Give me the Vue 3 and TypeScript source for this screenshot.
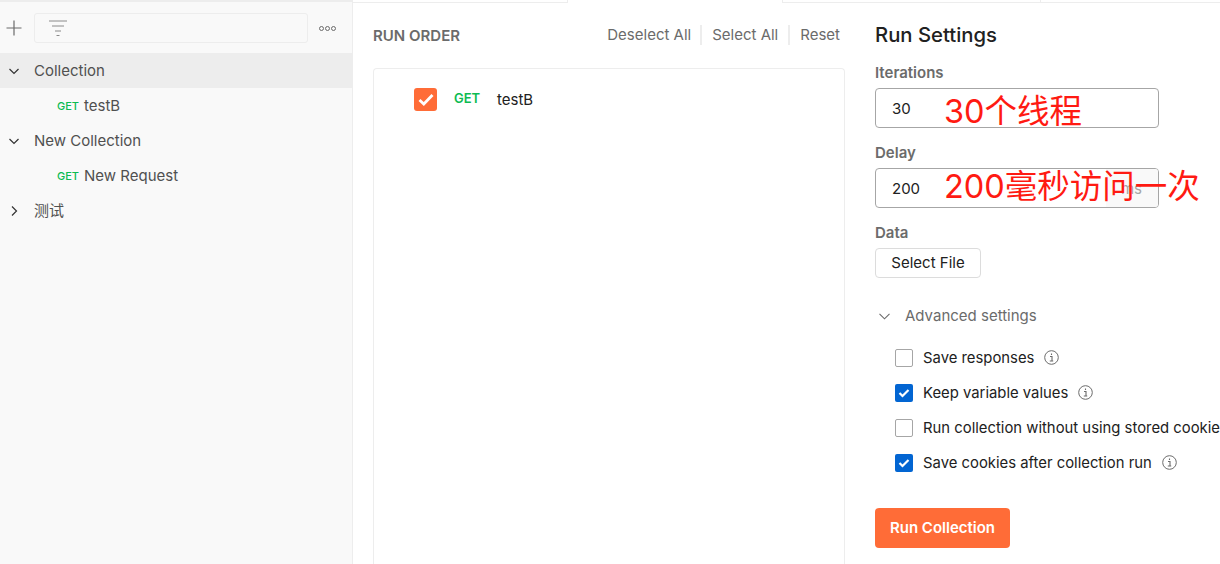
<template>
  <div class="app">
    <aside class="sidebar">
      <div class="side-top">
        <button class="icon-btn add" aria-label="New">
          <svg width="16" height="16" viewBox="0 0 16 16"><path d="M8 0.500V15.500M0.500 8H15.500" stroke="#6b6b6b" stroke-width="1.200" fill="none" /></svg>
        </button>
        <div class="filter">
          <svg width="18" height="16" viewBox="0 0 18 16"><path d="M0 1H18M3 6H15M6 11H12M7.500 15.500H10.500" stroke="#8a8a8a" stroke-width="1" fill="none" /></svg>
        </div>
        <div class="more" aria-label="More">
          <i></i><i></i><i></i>
        </div>
      </div>
      <div class="tree">
        <template v-for="row in treeRows" :key="row.label">
          <div v-if="row.kind === 'folder'" class="folder" :class="{ active: row.active }">
            <svg class="caret" width="10" height="10" viewBox="0 0 10 10">
              <path v-if="row.open" d="M0.500 3L5 7.500L9.500 3" stroke="#333" stroke-width="1.200" fill="none" />
              <path v-else d="M3 0.500L7.500 5L3 9.500" stroke="#333" stroke-width="1.200" fill="none" />
            </svg>
            <span>{{ row.label }}</span>
          </div>
          <div v-else class="request">
            <span class="method">GET</span>
            <span>{{ row.label }}</span>
          </div>
        </template>
      </div>
    </aside>

    <div class="content">
      <div class="tabs">
        <div class="tab-line first"></div>
        <div class="tab-gap"></div>
        <div class="tab-line second"></div>
        <div class="tab-line third"></div>
      </div>

      <div class="columns">
        <section class="order">
          <header class="order-head">
            <h2>RUN ORDER</h2>
            <nav class="order-actions">
              <a>Deselect All</a>
              <a>Select All</a>
              <a>Reset</a>
            </nav>
          </header>
          <div class="order-box">
            <div class="order-row">
              <span class="big-check">
                <svg width="16" height="13" viewBox="0 0 16 13"><path d="M1.500 7L5.800 11L14.500 2" stroke="#fff" stroke-width="2.800" fill="none" /></svg>
              </span>
              <span class="order-method">GET</span>
              <span class="order-name">testB</span>
            </div>
          </div>
        </section>

        <section class="settings">
          <h1>Run Settings</h1>

          <label class="field-label">Iterations</label>
          <div class="input">
            <span class="value">30</span>
            <span class="note note-a">30个线程</span>
          </div>

          <label class="field-label">Delay</label>
          <div class="input">
            <span class="value">200</span>
            <span class="unit">ms</span>
            <span class="note note-b">200毫秒访问一次</span>
          </div>

          <label class="field-label">Data</label>
          <button class="file-btn">Select File</button>

          <div class="advanced">
            <svg width="11" height="7" viewBox="0 0 11 7"><path d="M0.500 0.800L5.500 5.800L10.500 0.800" stroke="#6b6b6b" stroke-width="1.100" fill="none" /></svg>
            <span>Advanced settings</span>
          </div>

          <ul class="options">
            <li v-for="opt in options" :key="opt.label">
              <span class="check" :class="{ on: opt.checked }">
                <svg v-if="opt.checked" width="12" height="10" viewBox="0 0 12 10"><path d="M1.500 5L4.500 8L10.500 2" stroke="#fff" stroke-width="2.200" fill="none" /></svg>
              </span>
              <span class="opt-label">{{ opt.label }}</span>
              <svg v-if="opt.info" class="info" width="15" height="15" viewBox="0 0 15 15">
                <circle cx="7.500" cy="7.500" r="6.800" stroke="#6b6b6b" stroke-width="1" fill="none" />
                <path d="M6 6.500H8V11M5.800 11H9.200M7.500 3.600V5" stroke="#6b6b6b" stroke-width="1.100" fill="none" />
              </svg>
            </li>
          </ul>

          <button class="run-btn">Run Collection</button>
        </section>
      </div>
    </div>
  </div>
</template>

<script setup lang="ts">
interface TreeRow {
  kind: 'folder' | 'request'
  label: string
  open?: boolean
  active?: boolean
}

interface RunOption {
  label: string
  checked: boolean
  info: boolean
}

const treeRows: TreeRow[] = [
  { kind: 'folder', label: 'Collection', open: true, active: true },
  { kind: 'request', label: 'testB' },
  { kind: 'folder', label: 'New Collection', open: true },
  { kind: 'request', label: 'New Request' },
  { kind: 'folder', label: '测试', open: false },
]

const options: RunOption[] = [
  { label: 'Save responses', checked: false, info: true },
  { label: 'Keep variable values', checked: true, info: true },
  { label: 'Run collection without using stored cookies', checked: false, info: false },
  { label: 'Save cookies after collection run', checked: true, info: true },
]
</script>

<style>
html,
body {
  margin: 0;
  overflow: hidden;
  background: #fff;
}
</style>

<style scoped>
.app {
  display: flex;
  width: 1220px;
  height: 564px;
  overflow: hidden;
  font-family: Inter, "Noto Sans CJK SC", sans-serif;
  font-size: 15px;
  color: #212121;
  background: #fff;
}

.sidebar {
  flex: 0 0 352px;
  border-right: 1px solid #ededed;
  background: #f9f9f9;
  box-shadow: inset 0 3px 0 -1px #ededed;
}

.side-top {
  display: flex;
  align-items: center;
  height: 53px;
  padding: 3px 0 0 6px;
  box-sizing: border-box;
}

.icon-btn {
  display: flex;
  padding: 0;
  border: 0;
  background: none;
}

.filter {
  display: flex;
  align-items: center;
  box-sizing: border-box;
  width: 274px;
  height: 30px;
  margin-left: 12px;
  padding-left: 14px;
  border: 1px solid #ededed;
  border-radius: 3px;
}

.more {
  display: flex;
  gap: 1px;
  margin-left: 11px;
}

.more i {
  width: 5px;
  height: 5px;
  box-sizing: border-box;
  border: 1px solid #6b6b6b;
  border-radius: 50%;
}

.folder,
.request {
  display: flex;
  align-items: center;
  height: 35px;
  line-height: 20px;
  color: #505050;
}

.folder.active {
  background: #ededed;
}

.caret {
  margin-left: 9px;
  margin-right: 15px;
}

.request {
  padding-left: 57px;
}

.method {
  width: 27px;
  font-size: 11px;
  font-weight: 500;
  color: #0cbb52;
}

.content {
  flex: 1;
  min-width: 0;
  display: flex;
  flex-direction: column;
}

.tabs {
  display: flex;
  flex: 0 0 3px;
}

.tab-line {
  box-sizing: content-box;
  height: 2px;
  border-bottom: 1px solid #ededed;
}

.tab-line.first {
  width: 214px;
}

.tab-gap {
  width: 214px;
  border-left: 1px solid #ededed;
  border-right: 1px solid #ededed;
}

.tab-line.second {
  width: 257px;
  border-right: 1px solid #ededed;
}

.tab-line.third {
  flex: 1;
}

.columns {
  display: flex;
  flex: 1;
  min-height: 0;
}

.order {
  flex: 0 0 472px;
  margin-left: 20px;
  display: flex;
  flex-direction: column;
}

.order-head {
  display: flex;
  align-items: center;
  justify-content: space-between;
  height: 65px;
  padding-bottom: 1px;
  box-sizing: border-box;
}

h2 {
  margin: 0;
  font-size: 15px;
  font-weight: 600;
  color: #6b6b6b;
}

.order-actions {
  display: flex;
  align-items: center;
  padding-right: 5px;
  color: #6b6b6b;
}

.order-actions a {
  padding: 0 10px;
  line-height: 20px;
  border-left: 2px solid #ededed;
}

.order-actions a:first-child {
  padding-right: 9px;
  border-left: 0;
}

.order-actions a:last-child {
  padding-right: 0;
}

.order-box {
  flex: 1;
  border: 1px solid #ededed;
  border-bottom: 0;
  border-radius: 4px 4px 0 0;
}

.order-row {
  display: flex;
  align-items: center;
  height: 60px;
  padding-left: 40px;
}

.big-check {
  display: flex;
  align-items: center;
  justify-content: center;
  width: 23px;
  height: 23px;
  border-radius: 3px;
  background: #ff6c37;
}

.order-method {
  width: 43px;
  margin-left: 17px;
  margin-top: -3px;
  font-size: 13px;
  font-weight: 600;
  color: #0cbb52;
}

.order-name {
  color: #212121;
}

.settings {
  flex: 1;
  min-width: 0;
  margin-left: 30px;
  white-space: nowrap;
}

h1 {
  margin: 20px 0 0;
  font-size: 20.300px;
  line-height: 24px;
  font-weight: 500;
  color: #212121;
}

.field-label {
  display: block;
  margin-top: 16px;
  line-height: 17px;
  font-weight: 600;
  color: #6b6b6b;
}

h1 + .field-label {
  margin-top: 17px;
}

.input {
  position: relative;
  display: flex;
  align-items: center;
  box-sizing: border-box;
  width: 284px;
  height: 40px;
  margin-top: 7px;
  padding-left: 16px;
  border: 1px solid #a6a6a6;
  border-radius: 4px;
}

.value {
  color: #212121;
}

.unit {
  position: absolute;
  top: 0;
  right: 0;
  bottom: 0;
  display: flex;
  align-items: center;
  padding: 0 16px 0 15px;
  border-radius: 0 3px 3px 0;
  color: #a6a6a6;
  background: #f9f9f9;
}

.note {
  position: absolute;
  left: 68px;
  top: 50%;
  font-size: 32.500px;
  line-height: 40px;
  color: #ff1a12;
  white-space: nowrap;
  transform: translateY(-50%);
}

.note-a {
  margin-top: 4px;
}

.note-b {
  margin-top: -1px;
}

.file-btn {
  display: block;
  box-sizing: border-box;
  width: 106px;
  height: 30px;
  margin-top: 7px;
  padding: 0 0 2px;
  border: 1px solid #dcdcdc;
  border-radius: 4px;
  font: inherit;
  color: #212121;
  background: #fff;
}

.advanced {
  display: flex;
  align-items: center;
  gap: 15px;
  margin-top: 28px;
  padding-left: 4px;
  line-height: 20px;
  color: #6b6b6b;
}

.options {
  margin: 14px 0 0;
  padding: 0 0 0 20px;
  list-style: none;
}

.options li {
  display: flex;
  align-items: center;
  height: 35px;
}

.check {
  display: flex;
  flex: 0 0 18px;
  align-items: center;
  justify-content: center;
  box-sizing: border-box;
  width: 18px;
  height: 18px;
  margin-right: 10px;
  border: 1px solid #a6a6a6;
  border-radius: 2px;
}

.check.on {
  border: 0;
  background: #0265d2;
}

.opt-label {
  font-size: 14.850px;
  color: #212121;
}

.info {
  flex: 0 0 15px;
  margin-left: 10px;
}

.run-btn {
  display: block;
  width: 135px;
  height: 40px;
  margin-top: 28px;
  padding: 0 0 2px;
  border: 0;
  border-radius: 4px;
  font: inherit;
  font-weight: 600;
  color: #fff;
  background: #ff6c37;
}
</style>
